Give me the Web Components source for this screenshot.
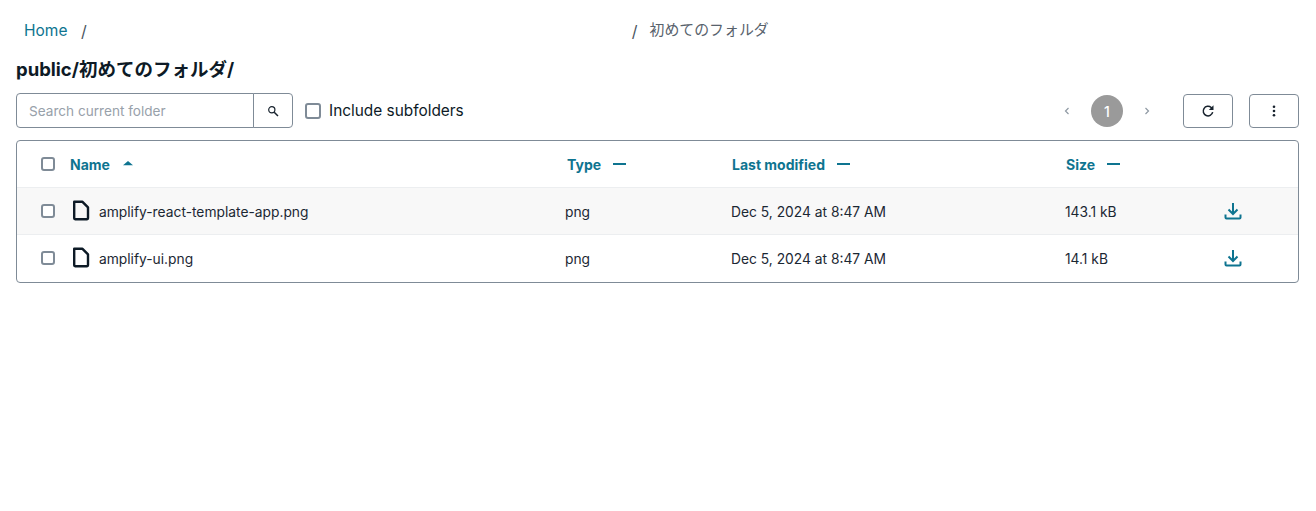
<!DOCTYPE html>
<html lang="ja">
<head>
<meta charset="utf-8">
<title>Storage browser</title>
<style>
  html, body { margin: 0; background: #fff; }
  body {
    font-family: Inter, "Noto Sans CJK JP", sans-serif;
    color: #0d1a26;
  }
</style>
</head>
<body>
<sb-browser></sb-browser>
<script>
const TEAL = '#0e7490';
const FONT = 'Inter, "Noto Sans CJK JP", sans-serif';

// Small checkbox, label is slotted
class SbCheckbox extends HTMLElement {
  constructor() {
    super();
    this.attachShadow( {mode: 'open'} ).innerHTML = `
      <style>
        :host { display: inline-flex; align-items: center; gap: 8px; font-size: 15.4px; line-height: 24px; }
        i {
          box-sizing: border-box; display: block; flex: none;
          width: var( --box, 14px ); height: var( --box, 14px );
          border: 2px solid #7f8b97; border-radius: 3px; background: #fff;
        }
      </style>
      <i></i><slot></slot>
    `;
  }
}
customElements.define( 'sb-checkbox', SbCheckbox );

class SbBreadcrumbs extends HTMLElement {
  constructor() {
    super();
    this.attachShadow( {mode: 'open'} ).innerHTML = `
      <style>
        :host { display: flex; align-items: center; height: 24px; padding-left: 8px; font-size: 15.5px; line-height: 24px; }
        a { color: ${TEAL}; text-decoration: none; width: 57px; padding-top: 1px; }
        .sep { color: #4a5560; font-size: 16px; padding-top: 1px; }
        .gap { width: 545px; }
        .cur { color: #58626c; font-size: 14.9px; margin-left: 12px; }
      </style>
      <a href="#">Home</a>
      <span class="sep">/</span>
      <span class="gap"></span>
      <span class="sep">/</span>
      <span class="cur">初めてのフォルダ</span>
    `;
  }
}
customElements.define( 'sb-breadcrumbs', SbBreadcrumbs );

class SbSearch extends HTMLElement {
  constructor() {
    super();
    this.attachShadow( {mode: 'open'} ).innerHTML = `
      <style>
        :host { display: flex; width: 277px; height: 35px; font-size: 13.6px; }
        input {
          box-sizing: border-box; flex: none; width: 238px; height: 100%; margin: 0; padding: 1px 12px 0;
          border: 1px solid #7f8b97; border-radius: 4px 0 0 4px; outline: none;
          font: inherit; font-family: ${FONT}; color: #0d1a26;
        }
        input::placeholder { color: #98a1aa; opacity: 1; }
        button {
          box-sizing: border-box; flex: none; width: 40px; height: 100%; margin: 0 0 0 -1px; padding: 0;
          display: flex; align-items: center; justify-content: center;
          border: 1px solid #7f8b97; border-radius: 0 4px 4px 0; background: #fff;
        }
      </style>
      <input placeholder="Search current folder">
      <button aria-label="Search">
        <svg width="12" height="12" viewBox="0 0 12 12" fill="none" stroke="#17222d">
          <circle cx="4.8" cy="4.8" r="3.1" stroke-width="1.2"/>
          <path d="M7.2 7.2 11 11" stroke-width="1.5"/>
        </svg>
      </button>
    `;
  }
}
customElements.define( 'sb-search', SbSearch );

class SbPagination extends HTMLElement {
  constructor() {
    super();
    this.attachShadow( {mode: 'open'} ).innerHTML = `
      <style>
        :host { display: flex; align-items: center; gap: 0; height: 32px; }
        svg { display: block; }
        span {
          width: 32px; height: 32px; margin: 0 20px 0 20px; border-radius: 50%;
          background: #9a9a9a; color: #fff; font-size: 14px; font-weight: 500;
          display: flex; align-items: center; justify-content: center;
        }
      </style>
      <svg width="8" height="10" viewBox="0 0 8 10" fill="none" stroke="#8f99a3" stroke-width="1.2"><path d="M5.5 2 2.5 5l3 3"/></svg>
      <span>1</span>
      <svg width="8" height="10" viewBox="0 0 8 10" fill="none" stroke="#8f99a3" stroke-width="1.2"><path d="M2.5 2l3 3-3 3"/></svg>
    `;
  }
}
customElements.define( 'sb-pagination', SbPagination );

class SbIconButton extends HTMLElement {
  constructor() {
    super();
    this.attachShadow( {mode: 'open'} ).innerHTML = `
      <style>
        :host {
          box-sizing: border-box; display: flex; align-items: center; justify-content: center;
          width: 50px; height: 34px; border: 1px solid #7f8b97; border-radius: 4px; background: #fff;
        }
      </style>
      <slot></slot>
    `;
  }
}
customElements.define( 'sb-icon-button', SbIconButton );

class SbHeaderCell extends HTMLElement {
  constructor() {
    super();
    const sorted = this.hasAttribute( 'sorted' );
    this.attachShadow( {mode: 'open'} ).innerHTML = `
      <style>
        :host { display: flex; align-items: center; gap: 12px; padding-top: 2px; color: ${TEAL}; font-size: 14px; font-weight: 700; line-height: 20px; }
        svg { display: block; flex: none; }
      </style>
      <slot></slot>
      ${sorted
        ? '<svg width="12" height="12" viewBox="0 0 12 12" style="margin-top:-4px"><path d="M1 8.2 6 4l5 4.2z" fill="' + TEAL + '"/></svg>'
        : '<svg width="13" height="12" viewBox="0 0 13 12"><path d="M0 5h13" stroke="' + TEAL + '" stroke-width="2" fill="none"/></svg>'}
    `;
  }
}
customElements.define( 'sb-header-cell', SbHeaderCell );

class SbFileRow extends HTMLElement {
  constructor() {
    super();
    this.attachShadow( {mode: 'open'} ).innerHTML = `
      <style>
        :host {
          display: grid; grid-template-columns: 53px 495px 166px 334px 159px 1fr; align-items: center;
          height: 46px; border-top: 1px solid #eceef0; font-size: 13.8px; line-height: 20px; color: #1b2733;
        }
        :host( [shaded] ) { background: #f8f8f8; }
        .check { padding-left: 24px; display: flex; }
        .name { display: flex; align-items: center; gap: 8px; margin-left: 3px; grid-column: 2; }
        .name svg { flex: none; margin-top: -2px; }
        .t { padding-top: 2px; }
        .dl { display: flex; }
      </style>
      <div class="check"><sb-checkbox></sb-checkbox></div>
      <div class="name">
        <svg width="18" height="21" viewBox="1 0 18 21" fill="none" stroke="#0d1a26" stroke-width="2.400" stroke-linejoin="round">
          <path d="M2.200 1.800H10.500L16 7.300V18.300A.9.9 0 0 1 15.100 19.200H3.100A.9.9 0 0 1 2.200 18.300Z"/>
        </svg>
        <span class="t">${this.getAttribute( 'name' )}</span>
      </div>
      <div class="t">png</div>
      <div class="t">Dec 5, 2024 at 8:47 AM</div>
      <div class="t">${this.getAttribute( 'size' )}</div>
      <div class="dl">
        <svg width="18" height="18" viewBox="0 0 18 18" fill="none" stroke="${TEAL}" stroke-width="2">
          <path d="M9 1V11.500"/>
          <path d="M4.500 7.500 9 12 13.500 7.500"/>
          <path d="M1.500 12.500V15.500A1 1 0 0 0 2.500 16.500H15.500A1 1 0 0 0 16.500 15.500V12.500"/>
        </svg>
      </div>
    `;
  }
}
customElements.define( 'sb-file-row', SbFileRow );

class SbTable extends HTMLElement {
  constructor() {
    super();
    this.attachShadow( {mode: 'open'} ).innerHTML = `
      <style>
        :host { display: block; padding-bottom: 1px; border: 1px solid #7f8b97; border-radius: 4px; overflow: hidden; }
        .head {
          display: grid; grid-template-columns: 53px 497px 165px 334px 1fr; align-items: center; height: 46px;
        }
        .check { padding-left: 24px; display: flex; }
      </style>
      <div class="head">
        <div class="check"><sb-checkbox></sb-checkbox></div>
        <sb-header-cell sorted>Name</sb-header-cell>
        <sb-header-cell>Type</sb-header-cell>
        <sb-header-cell>Last modified</sb-header-cell>
        <sb-header-cell>Size</sb-header-cell>
      </div>
      <slot></slot>
    `;
  }
}
customElements.define( 'sb-table', SbTable );

class SbBrowser extends HTMLElement {
  constructor() {
    super();
    this.attachShadow( {mode: 'open'} ).innerHTML = `
      <style>
        :host { display: block; padding: 18px 17px 0 16px; }
        h1 { margin: 13px 0 0; font-size: 18.5px; font-weight: 700; line-height: 29px; color: #0d1a26; }
        .bar { display: flex; align-items: flex-start; margin-top: 9px; height: 36px; }
        .bar sb-search { width: 277px; }
        .bar sb-checkbox { --box: 16px; margin: 6px 0 0 12px; }
        .bar sb-pagination { margin: 2px 32px 0 auto; }
        .bar sb-icon-button { margin-top: 1px; }
        .bar sb-icon-button + sb-icon-button { margin-left: 16px; }
        sb-table { margin-top: 11px; }
      </style>
      <sb-breadcrumbs></sb-breadcrumbs>
      <h1>public/初めてのフォルダ/</h1>
      <div class="bar">
        <sb-search></sb-search>
        <sb-checkbox>Include subfolders</sb-checkbox>
        <sb-pagination></sb-pagination>
        <sb-icon-button>
          <svg width="14" height="14" viewBox="0 0 14 14" fill="none" stroke="#17222d" stroke-width="1.500">
            <path d="M11.700 8.200A4.800 4.800 0 1 1 10.200 3.500L11 4.300"/>
            <path d="M12.500 1.300V6H7.800Z" fill="#17222d" stroke="none"/>
          </svg>
        </sb-icon-button>
        <sb-icon-button>
          <svg width="4" height="12" viewBox="0 0 4 12" fill="#17222d"><circle cx="2" cy="1.700" r="1.300"/><circle cx="2" cy="6" r="1.300"/><circle cx="2" cy="10.300" r="1.300"/></svg>
        </sb-icon-button>
      </div>
      <sb-table>
        <sb-file-row shaded name="amplify-react-template-app.png" size="143.1 kB"></sb-file-row>
        <sb-file-row name="amplify-ui.png" size="14.1 kB"></sb-file-row>
      </sb-table>
    `;
  }
}
customElements.define( 'sb-browser', SbBrowser );
</script>
</body>
</html>
